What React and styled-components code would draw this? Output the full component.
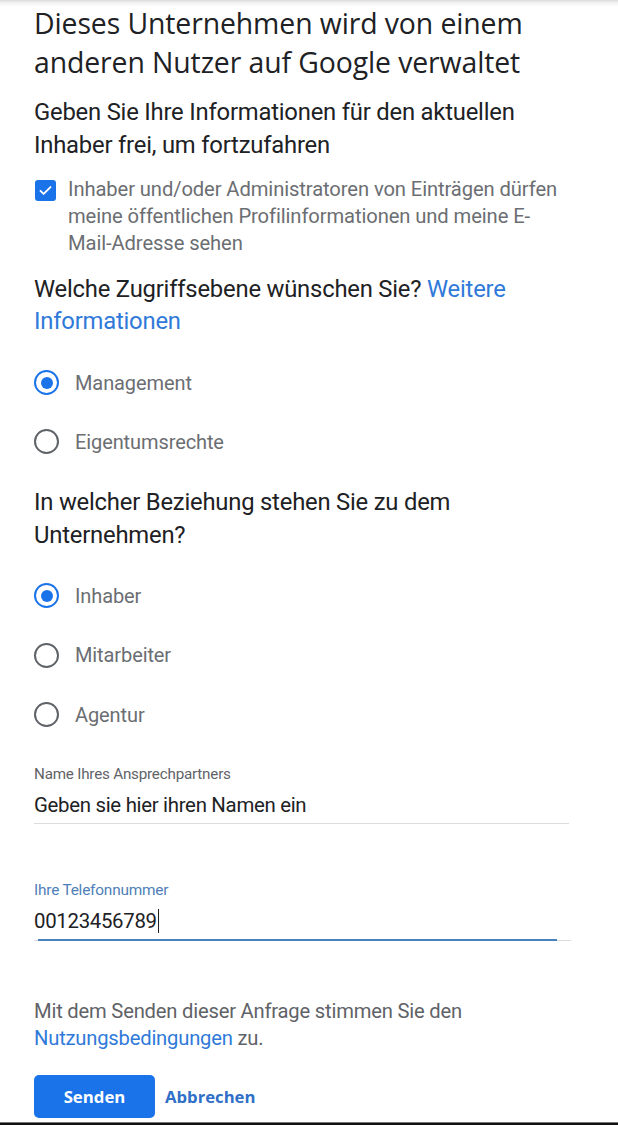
import React from "react";
import styled, { createGlobalStyle } from "styled-components";

const Global = createGlobalStyle`
  html, body { margin: 0; padding: 0; background: #fff; }
  body { font-family: Roboto, "Liberation Sans", Arial, sans-serif; }
  * { box-sizing: border-box; }
`;

const Page = styled.div`
  width: 618px;
  height: 1125px;
  display: flex;
  flex-direction: column;
  background: linear-gradient(to bottom, #dcdcdc 0px, #f3f3f3 3px, #ffffff 7px);
  overflow: hidden;
`;

const Content = styled.div`
  flex: 1;
  display: flex;
  flex-direction: column;
  padding: 4px 48px 0 34px;
`;

const Heading = styled.h1`
  margin: 0;
  font-family: "Open Sans", Roboto, sans-serif;
  font-weight: 400;
  font-size: 28.4px;
  line-height: 39px;
  color: #202124;
  letter-spacing: -0.1px;
`;

const Lead = styled.p`
  margin: ${(p) => p.$mt || 0}px 0 0;
  font-size: 23.8px;
  line-height: ${(p) => p.$lh || 33}px;
  color: #202124;
  letter-spacing: -0.2px;
`;

const Link = styled.a`
  color: #2f7ad9;
  text-decoration: none;
`;

const CheckRow = styled.label`
  margin-top: 14px;
  display: flex;
  align-items: flex-start;
  gap: 12px;
`;

const CheckBox = styled.span`
  flex: none;
  width: 21px;
  height: 21px;
  margin: 4px 0 0 1px;
  border-radius: 3px;
  background: #1a73e8;
  display: flex;
  align-items: center;
  justify-content: center;
`;

const CheckText = styled.span`
  font-size: 20.2px;
  line-height: 27px;
  color: #6b6e72;
  letter-spacing: -0.1px;
`;

const RadioGroup = styled.div`
  margin-top: ${(p) => p.$mt}px;
  display: flex;
  flex-direction: column;
`;

const RadioRow = styled.label`
  height: ${(p) => p.$h}px;
  display: flex;
  align-items: center;
  gap: 16px;
`;

const RadioCircle = styled.span`
  flex: none;
  width: 25px;
  height: 25px;
  border-radius: 50%;
  border: 2px solid ${(p) => (p.$checked ? "#1a73e8" : "#5f6368")};
  display: flex;
  align-items: center;
  justify-content: center;
  &::after {
    content: "";
    width: 12px;
    height: 12px;
    border-radius: 50%;
    background: ${(p) => (p.$checked ? "#1a73e8" : "transparent")};
  }
`;

const RadioText = styled.span`
  font-size: 20px;
  color: #6b6e72;
  letter-spacing: -0.1px;
`;

const Field = styled.div`
  margin-top: ${(p) => p.$mt}px;
  width: ${(p) => p.$w}px;
  display: flex;
  flex-direction: column;
  border-bottom: 1px solid #dadce0;
  &::after {
    content: "";
    display: ${(p) => (p.$focused ? "block" : "none")};
    height: 2px;
    margin: 0 14px -1px 4px;
    background: #4a82c0;
  }
`;

const FieldLabel = styled.span`
  font-size: ${(p) => (p.$focused ? 15.4 : 15.2)}px;
  line-height: 18px;
  color: ${(p) => (p.$focused ? "#4f7fb8" : "#5f6368")};
  letter-spacing: -0.2px;
`;

const FieldValue = styled.span`
  margin-top: 9px;
  font-size: 20.4px;
  line-height: 27px;
  padding-bottom: ${(p) => p.$pb}px;
  color: #202124;
  letter-spacing: -0.3px;
  display: flex;
  align-items: center;
`;

const Caret = styled.span`
  display: inline-block;
  width: 1.5px;
  height: 24px;
  background: #202124;
  margin-left: 1px;
`;

const Terms = styled.p`
  margin: 57px 0 0;
  font-size: 20.2px;
  line-height: 27px;
  color: #5f6368;
  letter-spacing: -0.2px;
`;

const Actions = styled.div`
  margin-top: 23px;
  display: flex;
  align-items: center;
  gap: 10px;
`;

const PrimaryButton = styled.button`
  width: 121px;
  height: 43px;
  border: none;
  border-radius: 5px;
  background: #1a73e8;
  color: #fff;
  font-family: "Open Sans", Roboto, sans-serif;
  font-weight: 700;
  font-size: 16.8px;
  cursor: pointer;
`;

const TextButton = styled.button`
  border: none;
  background: none;
  padding: 0;
  color: #2f6fc8;
  font-family: "Open Sans", Roboto, sans-serif;
  font-weight: 700;
  font-size: 16.7px;
  cursor: pointer;
`;

const BottomBar = styled.div`
  flex: none;
  height: 3px;
  background: #111;
  border-top: 1px solid #777;
`;

export default function App() {
  return (
    <>
      <Global />
      <Page>
        <Content>
          <Heading>
            Dieses Unternehmen wird von einem anderen Nutzer auf Google verwaltet
          </Heading>
          <Lead $mt={14}>
            Geben Sie Ihre Informationen für den aktuellen Inhaber frei, um fortzufahren
          </Lead>
          <CheckRow>
            <CheckBox>
              <svg width="15" height="15" viewBox="0 0 24 24" fill="none">
                <path d="M4 12.5l5 5L20 6.5" stroke="#fff" strokeWidth="3" strokeLinecap="round" strokeLinejoin="round" />
              </svg>
            </CheckBox>
            <CheckText>
              Inhaber und/oder Administratoren von Einträgen dürfen meine öffentlichen Profilinformationen und meine E-Mail-Adresse sehen
            </CheckText>
          </CheckRow>
          <Lead $mt={16} $lh={32}>
            Welche Zugriffsebene wünschen Sie? <Link href="#">Weitere Informationen</Link>
          </Lead>
          <RadioGroup $mt={16}>
            <RadioRow $h={59}>
              <RadioCircle $checked />
              <RadioText>Management</RadioText>
            </RadioRow>
            <RadioRow $h={59}>
              <RadioCircle />
              <RadioText>Eigentumsrechte</RadioText>
            </RadioRow>
          </RadioGroup>
          <Lead $mt={15}>
            In welcher Beziehung stehen Sie zu dem Unternehmen?
          </Lead>
          <RadioGroup $mt={14}>
            <RadioRow $h={59.5}>
              <RadioCircle $checked />
              <RadioText>Inhaber</RadioText>
            </RadioRow>
            <RadioRow $h={59.5}>
              <RadioCircle />
              <RadioText>Mitarbeiter</RadioText>
            </RadioRow>
            <RadioRow $h={59.5}>
              <RadioCircle />
              <RadioText>Agentur</RadioText>
            </RadioRow>
          </RadioGroup>
          <Field $mt={20} $w={535}>
            <FieldLabel>Name Ihres Ansprechpartners</FieldLabel>
            <FieldValue $pb={4}>Geben sie hier ihren Namen ein</FieldValue>
          </Field>
          <Field $mt={57} $w={537} $focused>
            <FieldLabel $focused>Ihre Telefonnummer</FieldLabel>
            <FieldValue $pb={4}>
              00123456789
              <Caret />
            </FieldValue>
          </Field>
          <Terms>
            Mit dem Senden dieser Anfrage stimmen Sie den{" "}
            <Link href="#">Nutzungsbedingungen</Link> zu.
          </Terms>
          <Actions>
            <PrimaryButton>Senden</PrimaryButton>
            <TextButton>Abbrechen</TextButton>
          </Actions>
        </Content>
        <BottomBar />
      </Page>
    </>
  );
}
